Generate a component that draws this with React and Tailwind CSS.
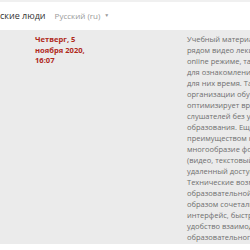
import React from 'react';

const lines = [
  'Учебный материал размещается',
  'рядом видео лекций, доступных',
  'online режиме, так и в записи',
  'для ознакомления в удобное',
  'для них время. Такая форма',
  'организации обучения',
  'оптимизирует время',
  'слушателей без ущерба для',
  'образования. Еще одним',
  'преимуществом курса является',
  'многообразие форм подачи',
  '(видео, текстовый материал,',
  'удаленный доступ).',
  'Технические возможности',
  'образовательной платформы',
  'образом сочетали в себе',
  'интерфейс, быстроту работы и',
  'удобство взаимодействия',
  'образовательного процесса.',
];

const App = () => {
  return (
    <div className="w-[250px] h-[250px] overflow-hidden bg-white font-['Open_Sans',sans-serif]">
      <header className="h-[30px] border-t-2 border-[#f0f0f0] flex items-center whitespace-nowrap">
        <span className="text-[9px] text-[#333]">ские люди</span>
        <span className="ml-[9px] text-[8px] text-[#999] flex items-center">
          Русский (ru)
          <span className="ml-[4px] text-[5px]">▼</span>
        </span>
      </header>

      <section className="h-[214px] bg-[#ebebeb] flex pt-[4px] whitespace-nowrap">
        <div className="w-[187px] shrink-0 pl-[35px] text-[7.6px] leading-[10.5px] font-bold text-[#b0291b]">
          <div>Четверг, 5</div>
          <div>ноября 2020,</div>
          <div>16:07</div>
        </div>
        <div className="text-[7.5px] leading-[11px] text-[#6f6f6f]">
          {lines.map((line, i) => (
            <div key={i}>{line}</div>
          ))}
        </div>
      </section>
    </div>
  );
};

export default App;
